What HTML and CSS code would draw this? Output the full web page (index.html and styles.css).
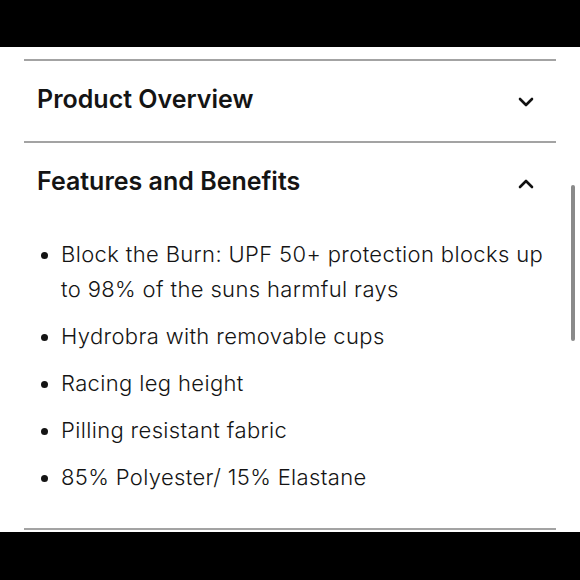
FILE: index.html
```html
<!DOCTYPE html>
<html lang="en">
<head>
<meta charset="utf-8">
<title>Product details</title>
<link rel="stylesheet" href="styles.css">
</head>
<body>
<div class="topbar"></div>
<div class="accordion">
  <section class="section">
    <div class="header">
      <h2 class="title">Product Overview</h2>
      <svg class="chevron" width="16" height="10" viewBox="0 0 16 10"><path d="M2 2 L8 8 L14 2" fill="none" stroke="#111" stroke-width="2.6" stroke-linecap="round" stroke-linejoin="round"/></svg>
    </div>
  </section>
  <section class="section">
    <div class="header">
      <h2 class="title">Features and Benefits</h2>
      <svg class="chevron" width="16" height="10" viewBox="0 0 16 10"><path d="M2 8 L8 2 L14 8" fill="none" stroke="#111" stroke-width="2.6" stroke-linecap="round" stroke-linejoin="round"/></svg>
    </div>
    <ul class="list">
      <li>Block the Burn: UPF 50+ protection blocks up to 98% of the suns harmful rays</li>
      <li>Hydrobra with removable cups</li>
      <li>Racing leg height</li>
      <li>Pilling resistant fabric</li>
      <li>85% Polyester/ 15% Elastane</li>
    </ul>
  </section>
  <div class="end-rule"></div>
</div>
<div class="bottombar"></div>
<div class="scrollbar"></div>
</body>
</html>
```
FILE: styles.css
```css
html, body {
  margin: 0;
  padding: 0;
  background: #fff;
}
body {
  font-family: Inter, "Noto Sans", sans-serif;
  color: #141414;
  width: 580px;
  height: 580px;
  overflow: hidden;
  position: relative;
}
.topbar {
  height: 47px;
  background: #000;
}
.accordion {
  margin: 12px 24px 0 24px;
}
.section {
  border-top: 2px solid #a3a3a3;
}
.header {
  height: 80px;
  box-sizing: border-box;
  display: flex;
  align-items: center;
  justify-content: space-between;
  padding: 0 22px 4px 13px;
}
.title {
  margin: 0;
  font-size: 25px;
  font-weight: 600;
  letter-spacing: 0;
}
.chevron {
  display: block;
  margin-top: 6px;
}
.list {
  margin: 0;
  padding: 14px 0 0 37px;
  list-style: none;
}
.list li {
  position: relative;
  font-size: 22px;
  font-weight: 350;
  letter-spacing: 0.36px;
  line-height: 35px;
  margin-bottom: 12px;
  padding-right: 8px;
}
.list li::before {
  content: "";
  position: absolute;
  left: -20px;
  top: 15px;
  width: 7px;
  height: 7px;
  border-radius: 50%;
  background: #141414;
}
.end-rule {
  margin-top: 33px;
  border-top: 2px solid #a3a3a3;
}
.bottombar {
  margin-top: 2px;
  height: 48px;
  background: #000;
}
.scrollbar {
  position: absolute;
  left: 571px;
  top: 185px;
  width: 4px;
  height: 156px;
  border-radius: 2px;
  background: #8a8a8a;
}
```
